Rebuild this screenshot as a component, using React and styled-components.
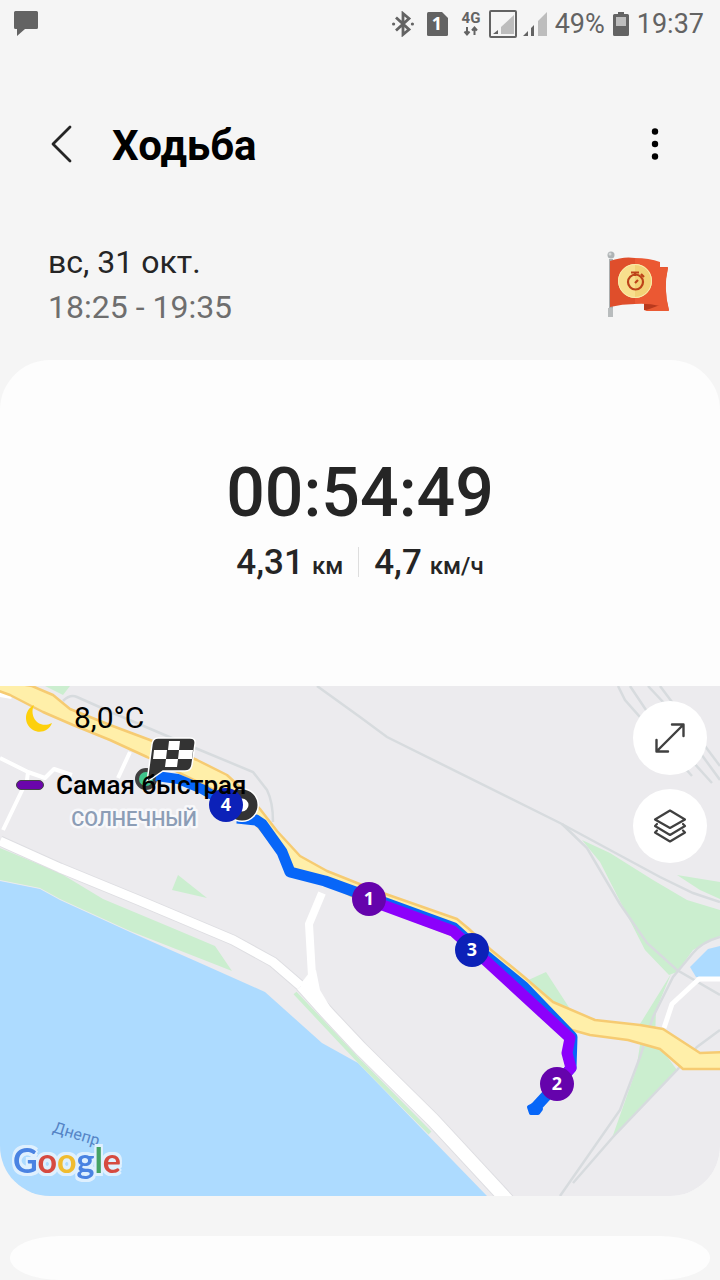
import styled, { createGlobalStyle } from 'styled-components'


const GlobalStyle = createGlobalStyle`
    * {
        box-sizing: border-box;
    }

    body {
        margin: 0;
        background-color: #f5f5f5;
        color: #252525;
        font-family: Roboto, "Liberation Sans", sans-serif;
    }

    svg {
        display: block;
        flex: none;
    }
`

const StatusBar = styled.div`
    display: flex;
    justify-content: space-between;
    align-items: center;
    height: 48px;
    padding: 0 16px 0 14px;
    color: #636363;
`

const StatusGroup = styled.div`
    display: flex;
    align-items: center;
    gap: 8px;
`

const StatusText = styled.span`
    font-size: 27px;
    line-height: 48px;
`

const Toolbar = styled.header`
    display: flex;
    align-items: center;
    height: 96px;
    margin-top: 48px;
    padding: 0 37px 0 34px;
`

const IconButton = styled.button`
    display: flex;
    justify-content: center;
    align-items: center;
    width: 56px;
    height: 56px;
    padding: 0;
    border: none;
    border-radius: 50%;
    background: none;
    cursor: pointer;
`

const Title = styled.h1`
    flex: 1;
    margin: 0;
    padding: 4px 0 0 22px;
    color: #000;
    font-size: 42px;
    font-weight: 700;
    line-height: 56px;
`

const Session = styled.section`
    display: flex;
    justify-content: space-between;
    align-items: center;
    padding: 48px 50px 30px 48px;
`

const SessionLine = styled.p`
    margin: 0;
    color: ${({ $muted }) => ($muted ? '#6e6e6e' : '#252525')};
    font-size: 32px;
    line-height: 45px;
`

const Card = styled.main`
    overflow: hidden;
    border-radius: 50px;
    background-color: #fdfdfd;
`

const Summary = styled.section`
    display: flex;
    flex-direction: column;
    align-items: center;
    padding: 93px 16px 102px;
`

const Duration = styled.div`
    font-size: 68px;
    font-weight: 500;
    line-height: 80px;
`

const Stats = styled.div`
    display: flex;
    align-items: center;
    gap: 15px;
    height: 40px;
    margin-top: 11px;
`

const Stat = styled.div`
    display: flex;
    align-items: baseline;
    gap: 8px;
    font-size: 35px;
    font-weight: 500;
    line-height: 40px;
`

const Unit = styled.span`
    font-size: 24px;
`

const Divider = styled.div`
    width: 1px;
    height: 30px;
    margin-bottom: 4px;
    background-color: #dedede;
`

const MapPanel = styled.section`
    position: relative;
`

const MapDrawing = styled.svg`
    width: 100%;
    height: auto;
    background-color: #ecebee;
`

const Logo = styled.text`
    font-family: Lato, sans-serif;
    font-size: 34px;
    font-weight: 700;
    filter: drop-shadow(2px 0 0 #dff0fe) drop-shadow(-2px 0 0 #dff0fe) drop-shadow(0 3px 0 #dff0fe) drop-shadow(0 -3px 0 #dff0fe);
`

const MapLegend = styled.div`
    position: absolute;
    top: 13px;
    left: 16px;
    display: flex;
    flex-direction: column;
    gap: 34px;
    color: #000;
`

const Weather = styled.div`
    display: flex;
    align-items: center;
    gap: 20px;
    padding-left: 9px;
    font-size: 30px;
    line-height: 38px;
`

const Fastest = styled.div`
    display: flex;
    align-items: center;
    gap: 12px;
    font-size: 26px;
    font-weight: 500;
    line-height: 28px;
`

const Swatch = styled.span`
    width: 28px;
    height: 10px;
    border: 1px solid #444;
    border-radius: 5px;
    background-color: #6a05ab;
`

const MapControls = styled.div`
    position: absolute;
    top: 15px;
    right: 13px;
    display: flex;
    flex-direction: column;
    gap: 14px;
`

const MapButton = styled(IconButton)`
    width: 74px;
    height: 74px;
    background-color: #fff;
`

const NextCard = styled.div`
    height: 44px;
    margin: 40px 10px 0;
    border-radius: 50px / 22px;
    background-color: #fdfdfd;
`

const MessageIcon = () => (
    <svg width="24" height="26" viewBox="0 0 24 26" fill="#636363">
        <path d="M1.500 0h21q1.500 0 1.500 1.500v15q0 1.500-1.500 1.500H11l-8 7v-7H1.500Q0 18 0 16.500v-15Q0 0 1.500 0z" />
    </svg>
)

const BluetoothIcon = () => (
    <svg width="22" height="26" viewBox="0 0 22 26" fill="none" stroke="#636363" strokeWidth="2.8">
        <path d="M4 6.500L17 18.500l-6 5V2.500l6 5L4 19.500" />
        <circle cx="1.6" cy="13" r="1.6" fill="#636363" stroke="none" />
        <circle cx="20.4" cy="13" r="1.6" fill="#636363" stroke="none" />
    </svg>
)

const SimIcon = () => (
    <svg width="31" height="24" viewBox="-5 0 31 24">
        <path d="M1.500 0H15l6 6v16.500q0 1.500-1.500 1.500h-18Q0 24 0 22.500v-21Q0 0 1.500 0z" fill="#636363" />
        <text x="10" y="18" textAnchor="middle" fontFamily="Open Sans, sans-serif" fontSize="18" fontWeight="700" fill="#fff">1</text>
    </svg>
)

const NetworkIcon = () => (
    <svg width="20" height="32" viewBox="0 0 20 32">
        <text x="10" y="15" textAnchor="middle" fontSize="15" fontWeight="700" fill="#636363">4G</text>
        <path d="M6 19v7M3.500 23.500L6 26.500l2.500-3M13.500 27v-7M11 22.500l2.500-3 2.500 3" fill="none" stroke="#636363" strokeWidth="2" />
    </svg>
)

const SignalIcon = () => (
    <svg width="58" height="28" viewBox="0 0 58 28">
        <rect x="1" y="1" width="26" height="26" rx="1" fill="none" stroke="#636363" strokeWidth="2" />
        <path d="M25 5v19H12v-7z" fill="#bdbdbd" />
        <path d="M9 20v4H4z" fill="#636363" />
        <path d="M58 2v24h-9V11z" fill="#bdbdbd" />
        <path d="M39 21v5h-5zM45 15v11h-3V18z" fill="#636363" />
    </svg>
)

const BatteryIcon = () => (
    <svg width="16" height="24" viewBox="0 0 16 24">
        <path d="M5 0h6v2h3.500Q16 2 16 3.500v19q0 1.500-1.500 1.500h-13Q0 24 0 22.500v-19Q0 2 1.500 2H5z" fill="#636363" />
        <path d="M3 5h10v9H3z" fill="#bdbdbd" />
    </svg>
)

const BackIcon = () => (
    <svg width="24" height="40" viewBox="0 0 24 40" fill="none" stroke="#252525" strokeWidth="2.8" strokeLinecap="round" strokeLinejoin="round">
        <path d="M20 3L3 20l17 17" />
    </svg>
)

const MoreIcon = () => (
    <svg width="8" height="34" viewBox="0 0 8 34" fill="#000">
        <circle cx="4" cy="4.500" r="3.2" />
        <circle cx="4" cy="17" r="3.2" />
        <circle cx="4" cy="29.500" r="3.2" />
    </svg>
)

const FlagBadge = () => (
    <svg width="64" height="68" viewBox="0 0 64 68">
        <path d="M3 8h4v58H3z" fill="#a9adae" />
        <path d="M2 57h5v9H2z" fill="#b8bcbd" />
        <circle cx="5" cy="4" r="3.5" fill="#aeb3b5" />
        <circle cx="4" cy="3" r="1.5" fill="#d5d8d9" />
        <path d="M47 16h15q-5 21 1 43l-25 0V54z" fill="#e65530" />
        <path d="M47 16l7 1v41l-16 1v-6z" fill="#b9391d" />
        <path d="M54 17h8q-5 21 1 43H38l16-6z" fill="#ea5a33" />
        <path d="M4 10Q18 5 29 7v46q-13 0-25 3z" fill="#df4e2b" />
        <path d="M29 7q14 0 25 4v44Q42 52 29 53z" fill="#eb5833" />
        <circle cx="29" cy="30" r="17" fill="#f8df8d" />
        <path d="M29 13a17 17 0 0 1 0 34z" fill="#f2d277" />
        <circle cx="29" cy="30" r="16.5" fill="none" stroke="#fae9ad" />
        <g fill="none" stroke="#bd4319" strokeWidth="2.2">
            <circle cx="29.5" cy="31" r="7.5" />
            <path d="M25 21.500h8M29 22v3M35 23l3 3M29 32l3-3" />
        </g>
    </svg>
)

const MoonIcon = () => (
    <svg width="29" height="28" viewBox="0 0 29 28" fill="#fdd00c">
        <path d="M9 1C-1 6-2 20 8 26c7 4 16 1 19-7-8 4-15 1-18-5-2-4-2-9 0-13z" />
    </svg>
)

const ExpandIcon = () => (
    <svg width="32" height="32" viewBox="0 0 32 32" fill="none" stroke="#404040" strokeWidth="2.4" strokeLinecap="round" strokeLinejoin="round">
        <path d="M3 29L29 3M18 2.500h11.500V14M2.500 18v11.500H14" />
    </svg>
)

const LayersIcon = () => (
    <svg width="34" height="34" viewBox="0 0 34 34" fill="none" stroke="#404040" strokeWidth="2.2" strokeLinecap="round" strokeLinejoin="round">
        <path d="M17 1.500L32 10.500 17 19 2 10.500z" />
        <path d="M4 15L2 17 17 26 32 17 30 15" />
        <path d="M4 21.500L2 23.500 17 32.500 32 23.500 30 21.500" />
    </svg>
)

const kilometers = [
    { label: '4', x: 226, y: 805, color: '#0c21b8' },
    { label: '1', x: 369, y: 899, color: '#6503ac' },
    { label: '3', x: 472, y: 950, color: '#0c21b8' },
    { label: '2', x: 557, y: 1084, color: '#6503ac' },
]

const RouteMap = () => (
    <MapDrawing viewBox="0 686 720 510" role="img" aria-label="Маршрут">
        {/* water and parks */}
        <path d="M0 881L40 889 60 900 130 932 200 963 265 992 322 1043 358 1063 487 1196H0z" fill="#addbff" />
        <g fill="#cbeecf">
            <path d="M0 848L60 873 103 899 170 927 215 946 232 971 130 931 60 899 40 888 0 880z" />
            <path d="M178 875L207 898 172 890z" />
            <path d="M45 686H70L63 695z" />
            <path d="M582 840L610 853 653 880 687 900 720 910V936L693 950 677 972 669 975 645 950 622 905 600 862z" />
            <path d="M677 875L720 882V899L700 890z" />
            <path d="M671 974L640 1024V1045L636 1070 612 1138 677 1070 655 1040 656 1010z" />
            <path d="M524 982L546 972 572 1012 550 1010z" />
        </g>
        <path d="M720 946L708 949 690 967 696 977H720z" fill="#addbff" />
        <path d="M295 993L360 1062 430 1133" fill="none" stroke="#cbeecf" strokeWidth="4" />

        {/* railways */}
        <g fill="none" stroke="#d7dbde" strokeWidth="2.5">
            <path d="M63 701Q70 694 77 697L113 713 200 750 253 772 267 790Q273 802 273 822" />
            <path d="M317 686L360 717 387 737 560 823 660 877 693 893 720 902" />
            <path d="M562 824L587 848 620 904 647 943 677 970 720 995" />
            <path d="M720 937Q702 942 693 953L673 977 653 1017 640 1057 620 1110 560 1196" />
            <path d="M720 1030L697 1047 677 1070 613 1137 573 1183" />
            <path d="M618 686L625 700 692 776M630 686L646 710 712 783M648 686L664 703 720 780M660 686L720 766" />
        </g>

        {/* side streets */}
        <g fill="none" stroke="#fff" strokeLinejoin="round">
            <path d="M0 758L28 772 27 780 3 830M28 772L45 778 54 769 72 775M130 752L118 778" strokeWidth="4" />
            <path d="M0 693L12 695" strokeWidth="8" />
            <path d="M720 979H699L672 1004 664 1028" strokeWidth="5" />
            <path d="M0 841L60 868 138 900 233 940 273 962 302 987" stroke="#dedee2" strokeWidth="11" />
            <path d="M0 841L60 868 138 900 233 940 273 962 302 987" strokeWidth="9" />
            <path d="M322 893L309 924 312 976" strokeWidth="8" />
            <path d="M302 985L330 1016 360 1048 433 1120 508 1201" stroke="#dedee2" strokeWidth="15" />
            <path d="M302 985L330 1016 360 1048 433 1120 508 1201" strokeWidth="13" />
        </g>
        <path d="M296 979L302 982 309 973 316 970 320 990 332 1010 318 1012z" fill="#fff" />

        {/* highway */}
        <path
            d="M-4 680L32 686 53 695 70 709 110 725 150 740 197 760 227 775 240 787 260 809 277 831 300 856 327 871 357 883
                380 892 457 919 469 929 490 949 523 976 553 1002 595 1020 640 1025 663 1029 700 1053 724 1052
                V1069H683L660 1049 628 1040 590 1035 572 1030 540 1005 490 966 455 936 357 899 325 882 290 868 265 835
                235 800 147 757 110 740 73 725 43 712 10 695 -4 690z"
            fill="#ffefa9"
            stroke="#f6cb72"
            strokeWidth="2.5"
            strokeLinejoin="round"
        />

        <text
            x="134"
            y="826"
            textAnchor="middle"
            fontSize="20"
            fontWeight="500"
            fill="#8c9db6"
            stroke="#f8f8fa"
            strokeWidth="5"
            strokeLinejoin="round"
            paintOrder="stroke"
        >
            СОЛНЕЧНЫЙ
        </text>
        <text transform="translate(52 1132) rotate(17)" fontSize="16" fill="#5584c6">Днепр</text>

        {/* start point */}
        <circle cx="146" cy="779" r="9" fill="#3fc48c" stroke="#404040" strokeWidth="4" />

        {/* walked route, fastest part on top */}
        <g fill="none" strokeLinejoin="round" strokeLinecap="butt">
            <path d="M156 776L178 779 202 789 228 804" stroke="#0766f8" strokeWidth="10" />
            <path d="M237 818L256 820 262 824 282 852 290 872 325 881 369 897 454 928 474 946 524 987 572 1037 571 1068 557 1084 535 1108" stroke="#0766f8" strokeWidth="11" />
            <path d="M529 1107L535 1104 541 1109 538 1113 531 1113z" fill="#0766f8" stroke="#0766f8" strokeWidth="4" />
            <path d="M369 900L453 931 472 948 570 1038 567 1053 571 1068 557 1084" stroke="#8c00fb" strokeWidth="11" />
        </g>

        {/* slow point behind the fourth kilometer */}
        <circle cx="242" cy="805" r="17" fill="#fff" />
        <circle cx="242" cy="805" r="11" fill="#fff" stroke="#333" strokeWidth="9" />

        {kilometers.map(({ label, x, y, color }) => (
            <g key={label}>
                <circle cx={x} cy={y} r="17" fill={color} />
                <text x={x} y={y + 6} textAnchor="middle" fontFamily="Open Sans, sans-serif" fontSize="18" fontWeight="700" fill="#fff">
                    {label}
                </text>
            </g>
        ))}

        {/* finish flag */}
        <path
            d="M158 738H190Q196 738 195 744L192 765Q191 771 185 771H163L147 782 152 744Q153 738 158 738z"
            fill="#333"
            stroke="#fff"
            strokeWidth="1.5"
        />
        <path d="M169 741H180L179 750H168zM154 750H167L166 759H153zM179 750H193L192 759H178zM166 759H178L177 767H165z" fill="#fff" />

        <Logo x="13" y="1173">
            <tspan fill="#4a83e2">G</tspan>
            <tspan fill="#d64a40">o</tspan>
            <tspan fill="#f0bc30">o</tspan>
            <tspan fill="#4a83e2">g</tspan>
            <tspan fill="#45a365">l</tspan>
            <tspan fill="#d64a40">e</tspan>
        </Logo>
    </MapDrawing>
)

const App = () => {
    return (
        <>
            <GlobalStyle />
            <StatusBar>
                <MessageIcon />
                <StatusGroup>
                    <BluetoothIcon />
                    <SimIcon />
                    <NetworkIcon />
                    <SignalIcon />
                    <StatusText>49%</StatusText>
                    <BatteryIcon />
                    <StatusText>19:37</StatusText>
                </StatusGroup>
            </StatusBar>
            <Toolbar>
                <IconButton aria-label="Назад"><BackIcon /></IconButton>
                <Title>Ходьба</Title>
                <IconButton aria-label="Ещё"><MoreIcon /></IconButton>
            </Toolbar>
            <Session>
                <div>
                    <SessionLine>вс, 31 окт.</SessionLine>
                    <SessionLine $muted>18:25 - 19:35</SessionLine>
                </div>
                <FlagBadge />
            </Session>
            <Card>
                <Summary>
                    <Duration>00:54:49</Duration>
                    <Stats>
                        <Stat>4,31<Unit>км</Unit></Stat>
                        <Divider />
                        <Stat>4,7<Unit>км/ч</Unit></Stat>
                    </Stats>
                </Summary>
                <MapPanel>
                    <RouteMap />
                    <MapLegend>
                        <Weather><MoonIcon />8,0°C</Weather>
                        <Fastest><Swatch />Самая быстрая</Fastest>
                    </MapLegend>
                    <MapControls>
                        <MapButton aria-label="Развернуть карту"><ExpandIcon /></MapButton>
                        <MapButton aria-label="Слои карты"><LayersIcon /></MapButton>
                    </MapControls>
                </MapPanel>
            </Card>
            <NextCard />
        </>
    )
}

export default App
